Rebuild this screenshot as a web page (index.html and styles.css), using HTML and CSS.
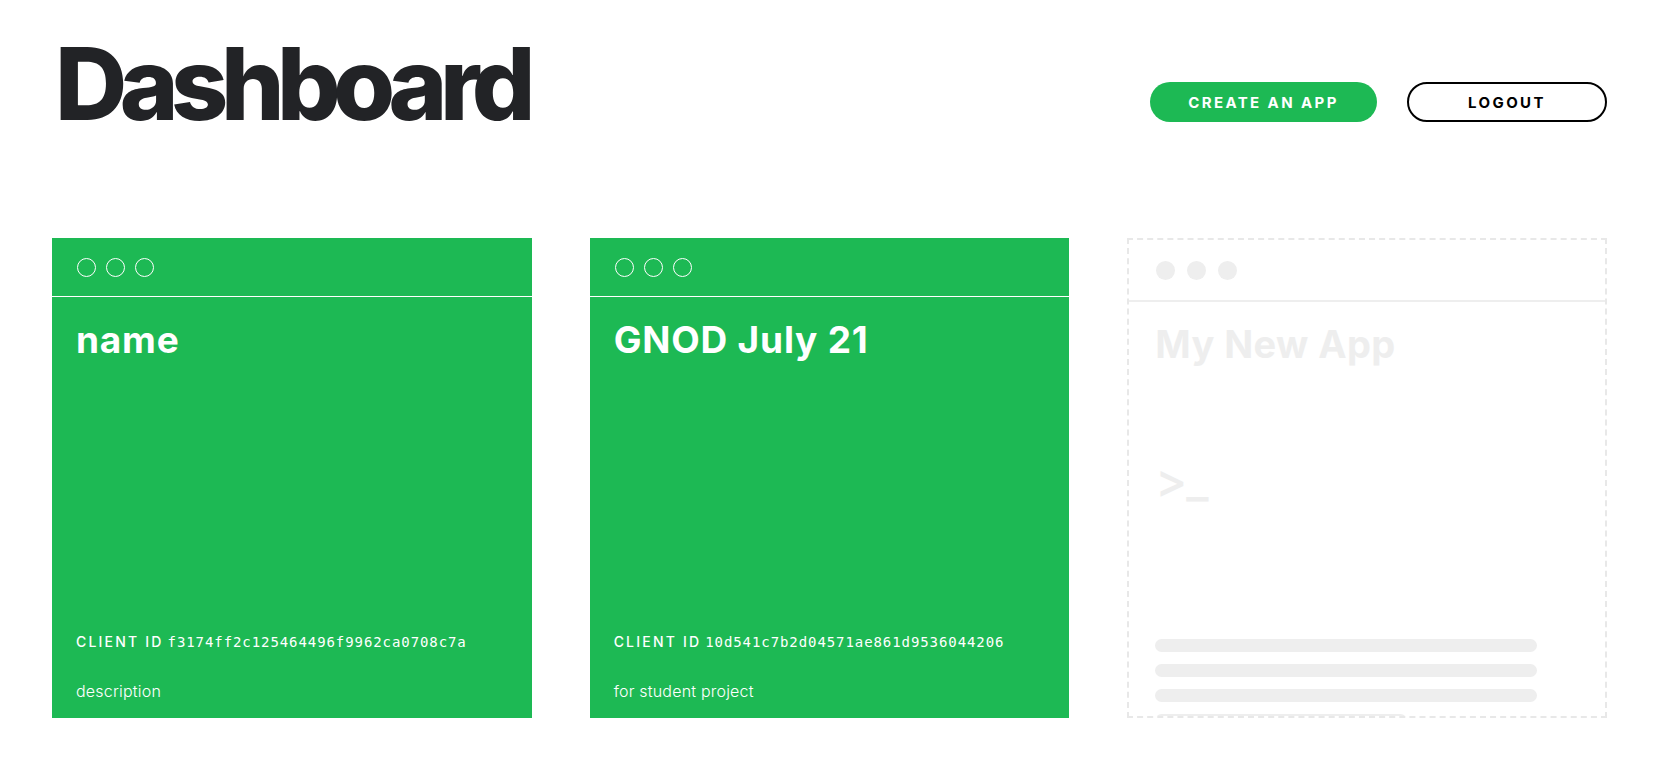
FILE: index.html
```html
<!DOCTYPE html>
<html lang="en">
<head>
<meta charset="utf-8">
<title>Dashboard</title>
<link rel="stylesheet" href="styles.css">
</head>
<body>
<div class="page">
  <header class="top">
    <h1 class="page-title">Dashboard</h1>
    <div class="actions">
      <button class="btn btn-primary">CREATE AN APP</button>
      <button class="btn btn-outline">LOGOUT</button>
    </div>
  </header>

  <main class="grid">
    <article class="card card-app">
      <div class="card-head">
        <span class="ring"></span><span class="ring"></span><span class="ring"></span>
      </div>
      <div class="card-body">
        <h2 class="app-name">name</h2>
        <p class="client-id"><span class="cid-label">CLIENT ID</span> <span class="cid-value">f3174ff2c125464496f9962ca0708c7a</span></p>
        <p class="app-desc">description</p>
      </div>
    </article>

    <article class="card card-app">
      <div class="card-head">
        <span class="ring"></span><span class="ring"></span><span class="ring"></span>
      </div>
      <div class="card-body">
        <h2 class="app-name">GNOD July 21</h2>
        <p class="client-id"><span class="cid-label">CLIENT ID</span> <span class="cid-value">10d541c7b2d04571ae861d9536044206</span></p>
        <p class="app-desc">for student project</p>
      </div>
    </article>

    <article class="card card-ghost">
      <div class="ghost-head">
        <span class="dot"></span><span class="dot"></span><span class="dot"></span>
      </div>
      <div class="ghost-body">
        <h2 class="ghost-name">My New App</h2>
        <div class="prompt">&gt;_</div>
        <div class="bars">
          <span class="bar"></span>
          <span class="bar"></span>
          <span class="bar"></span>
          <span class="bar bar-short"></span>
        </div>
      </div>
    </article>
  </main>
</div>
</body>
</html>
```

FILE: styles.css
```css
* {
  box-sizing: border-box;
}

html, body {
  margin: 0;
  padding: 0;
  background: #ffffff;
}

body {
  font-family: Inter, "Noto Sans", "Liberation Sans", sans-serif;
  color: #222326;
}

.page {
  padding: 34px 62px 0 52px;
}

.top {
  display: flex;
  justify-content: space-between;
  align-items: flex-end;
}

.page-title {
  margin: 0 0 0 3px;
  font-size: 100px;
  line-height: 100px;
  font-weight: 800;
  letter-spacing: -7.5px;
  color: #222326;
}

.actions {
  display: flex;
  gap: 30px;
  padding-bottom: 12px;
}

.btn {
  height: 40px;
  border-radius: 500px;
  font-family: Inter, "Liberation Sans", sans-serif;
  font-size: 15px;
  font-weight: 700;
  letter-spacing: 2.4px;
  padding: 0;
  display: flex;
  align-items: center;
  justify-content: center;
  cursor: pointer;
}

.btn-primary {
  width: 227px;
  background: #1db954;
  color: #ffffff;
  border: none;
}

.btn-outline {
  width: 200px;
  background: #ffffff;
  color: #000000;
  border: 2px solid #000000;
}

.grid {
  margin-top: 104px;
  display: grid;
  grid-template-columns: repeat(3, 1fr);
  gap: 58px;
}

.card {
  height: 480px;
  overflow: hidden;
  display: flex;
  flex-direction: column;
}

.card-app {
  background: #1db954;
  color: #ffffff;
}

.card-head {
  height: 59px;
  border-bottom: 1px solid #ffffff;
  display: flex;
  align-items: center;
  gap: 10px;
  padding-left: 25px;
  flex: none;
}

.ring {
  width: 19px;
  height: 19px;
  border: 1px solid #ffffff;
  border-radius: 50%;
}

.card-body {
  flex: 1;
  display: flex;
  flex-direction: column;
  padding: 21px 24px 15px;
}

.app-name {
  margin: 0;
  font-size: 37px;
  line-height: 1.21;
  font-weight: 700;
  letter-spacing: 0.8px;
}

.client-id {
  margin: auto 0 0;
  font-size: 14px;
  line-height: 20px;
}

.cid-label {
  font-weight: 500;
  letter-spacing: 2.2px;
}

.cid-value {
  font-family: "DejaVu Sans Mono", "Liberation Mono", monospace;
  font-size: 14px;
  letter-spacing: 0.92px;
}

.app-desc {
  margin: 27px 0 0;
  font-size: 16px;
  line-height: 24px;
  font-weight: 300;
  letter-spacing: 0.2px;
}

.card-ghost {
  border: 2px dashed #e8e8e8;
  background: #ffffff;
}

.ghost-head {
  height: 62px;
  border-bottom: 2px solid #eeeeee;
  display: flex;
  align-items: center;
  gap: 12px;
  padding-left: 27px;
  flex: none;
}

.dot {
  width: 19px;
  height: 19px;
  border-radius: 50%;
  background: #eeeeee;
}

.ghost-body {
  padding: 20px 26px 0;
  color: #eeeeee;
}

.ghost-name {
  margin: 0;
  font-size: 38px;
  line-height: 1.21;
  font-weight: 700;
  letter-spacing: 0.4px;
}

.prompt {
  margin-top: 88px;
  font-size: 48px;
  line-height: 48px;
  font-weight: 500;
  letter-spacing: -1px;
}

.bars {
  margin-top: 135px;
  display: flex;
  flex-direction: column;
  gap: 12px;
}

.bar {
  display: block;
  width: 382px;
  height: 13px;
  border-radius: 7px;
  background: #eeeeee;
}

.bar-short {
  width: 252px;
}
```
